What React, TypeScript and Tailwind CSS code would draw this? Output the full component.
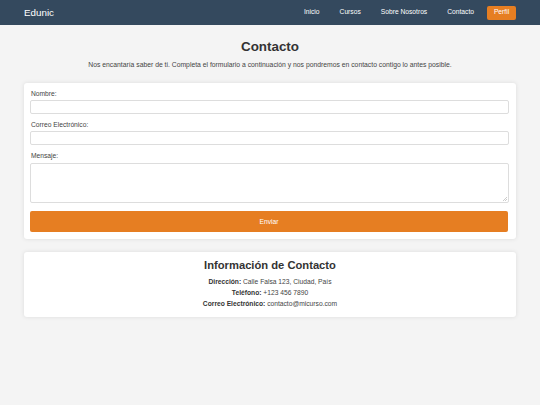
import React from "react";

export default function App() {
  return (
    <div
      className="min-h-[405px] bg-[#f4f4f4] text-[#333]"
      style={{ fontFamily: '"Liberation Sans", Arial, sans-serif' }}
    >
      <nav className="h-[25px] bg-[#34495e] flex items-center justify-between pl-[24px] pr-[24px]">
        <div className="text-white text-[9.8px] leading-none">Edunic</div>
        <div className="flex items-center text-[6.7px] text-white leading-none">
          <a className="px-[7px]">Inicio</a>
          <a className="px-[7px] ml-[6px]">Cursos</a>
          <a className="px-[7px] ml-[6px]">Sobre Nosotros</a>
          <a className="px-[7px] ml-[6px]">Contacto</a>
          <a className="ml-[6px] h-[14px] w-[29px] flex items-center justify-center bg-[#e67e22] rounded-[2px]">
            Perfil
          </a>
        </div>
      </nav>

      <div className="px-[24px]">
        <h1 className="text-center font-bold text-[13.4px] leading-none mt-[15px] text-[#333]">
          Contacto
        </h1>
        <p className="text-center text-[6.8px] leading-[8px] mt-[8px] text-[#444]">
          Nos encantaría saber de ti. Completa el formulario a continuación y nos pondremos en contacto contigo lo antes posible.
        </p>

        <form className="mt-[14px] bg-white rounded-[3px] shadow-[0_0_4px_rgba(0,0,0,0.1)] px-[7px] pt-[7px] pb-[7px]">
          <label className="block text-[6.7px] leading-[8px] text-[#444] mb-[2px]">Nombre:</label>
          <div className="h-[14px] border border-[#ddd] rounded-[2px] bg-white mb-[7px] -ml-px" />
          <label className="block text-[6.7px] leading-[8px] text-[#444] mb-[2px]">Correo Electrónico:</label>
          <div className="h-[14px] border border-[#ddd] rounded-[2px] bg-white mb-[7px] -ml-px" />
          <label className="block text-[6.7px] leading-[8px] text-[#444] mb-[3px]">Mensaje:</label>
          <div className="relative h-[40px] border border-[#ddd] rounded-[2px] bg-white mb-[8px] -ml-px">
            <svg className="absolute right-[1px] bottom-[1px]" width="4" height="4" viewBox="0 0 4 4">
              <path d="M4 0 L0 4 M4 2 L2 4" stroke="#aaa" strokeWidth="0.6" />
            </svg>
          </div>
          <button
            type="button"
            className="w-full h-[21px] bg-[#e67e22] text-white text-[6.7px] rounded-[2px] flex items-center justify-center -ml-px"
          >
            Enviar
          </button>
        </form>

        <div className="mt-[13px] bg-white rounded-[3px] shadow-[0_0_4px_rgba(0,0,0,0.1)] pt-[7px] pb-[8px] text-center">
          <h2 className="font-bold text-[11.2px] leading-[13px] text-[#333]">Información de Contacto</h2>
          <div className="mt-[4px] text-[6.7px] leading-[11px] text-[#444]">
            <p><strong className="text-[#333]">Dirección:</strong> Calle Falsa 123, Ciudad, País</p>
            <p><strong className="text-[#333]">Teléfono:</strong> +123 456 7890</p>
            <p><strong className="text-[#333]">Correo Electrónico:</strong> contacto@micurso.com</p>
          </div>
        </div>
      </div>
    </div>
  );
}
